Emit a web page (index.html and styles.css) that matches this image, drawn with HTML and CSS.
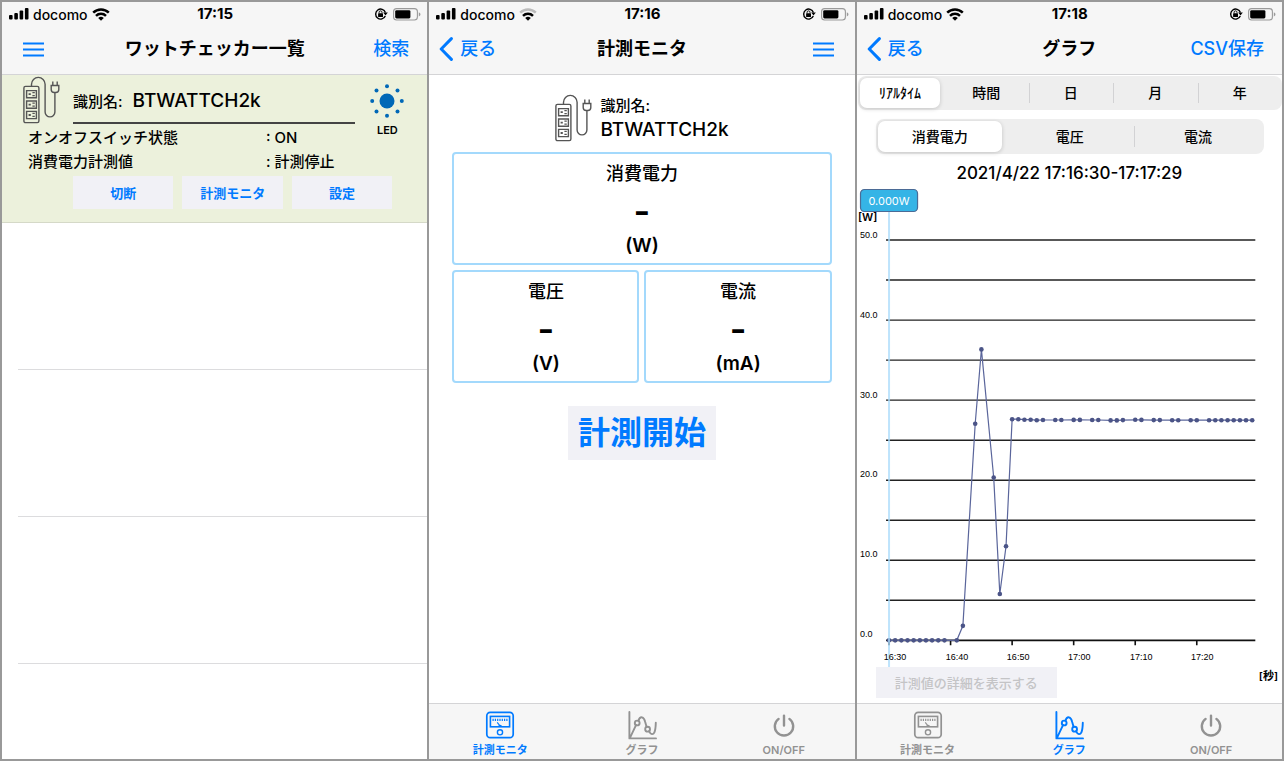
FILE: index.html
```html
<!DOCTYPE html>
<html lang="ja">
<head>
<meta charset="utf-8">
<meta name="viewport" content="width=device-width, initial-scale=1">
<title>ワットチェッカー</title>
<link rel="stylesheet" href="styles.css">
</head>
<body>
<svg class="defs" aria-hidden="true">
  <symbol id="signal" viewBox="0 0 20 12"><rect x="0" y="7" width="3.6" height="4.5" rx="1"/><rect x="5.3" y="5" width="3.6" height="6.5" rx="1"/><rect x="10.6" y="2.6" width="3.6" height="8.9" rx="1"/><rect x="15.9" y="0" width="3.6" height="11.5" rx="1"/></symbol>
  <symbol id="wifi-arc" viewBox="0 0 18 13"><path d="M1.2 4.6a11.2 11.2 0 0 1 15.6 0" fill="none" stroke="currentColor" stroke-width="2.5"/></symbol>
  <symbol id="wifi-core" viewBox="0 0 18 13"><path d="M4 7.8a7.2 7.2 0 0 1 10 0" fill="none" stroke="currentColor" stroke-width="2.5"/><path d="M9 12.8 6.2 10a4 4 0 0 1 5.6 0z"/></symbol>
  <symbol id="lock" viewBox="0 0 14 14"><path d="M11.4 5.4A5 5 0 1 0 11.3 9" fill="none" stroke="currentColor" stroke-width="1.4"/><path d="M9.2 5.6h4.6l-2.3 3z"/><rect x="4.1" y="6.2" width="4.9" height="3.8" rx=".6"/><path d="M5.1 6.4V5.3a1.45 1.45 0 0 1 2.9 0v1.1" fill="none" stroke="currentColor" stroke-width=".9"/></symbol>
  <symbol id="battery" viewBox="0 0 28 13"><rect x=".6" y=".6" width="23.8" height="11.4" rx="3" fill="none" stroke="#9a9a9a" stroke-width="1.1"/><rect x="2.2" y="2.2" width="15.2" height="8.2" rx="1.4"/><path d="M25.8 4.2c2.2.8 2.2 3.4 0 4.2z" fill="#9a9a9a"/></symbol>
  <symbol id="menu" viewBox="0 0 21 15"><path d="M0 1.5h21M0 7.5h21M0 13.5h21" stroke="currentColor" stroke-width="2"/></symbol>
  <symbol id="back" viewBox="0 0 14 24"><path d="M12.4 1.6 2.2 12l10.2 10.4" fill="none" stroke="currentColor" stroke-width="3" stroke-linecap="round" stroke-linejoin="round"/></symbol>
  <symbol id="strip" viewBox="0 0 38 48">
    <g fill="none" stroke="currentColor" stroke-width="1.4">
      <rect x=".9" y="10.4" width="15" height="36.2" rx="1.6"/>
      <path d="M8.5 10.4V8.2a6.8 6.8 0 0 1 13.6 0V36a4.8 4.8 0 0 0 9.8 0V16.8M28.2 9.5h7.6v4a3 3 0 0 1-3 3h-1.6a3 3 0 0 1-3-3zM29.8 9.5v-4M34.2 9.5v-4"/>
      <path d="M3.6 14.6h9.8v7.2H3.6zM3.6 25h9.8v7.2H3.6zM3.6 35.4h9.8v7.2H3.6z"/>
    </g>
    <path d="M5.6 17.3h2.2v1.8H5.6zM9.4 16h2.4v1.3H9.4zM9.4 19h2.4v1.3H9.4zM5.6 27.7h2.2v1.8H5.6zM9.4 26.4h2.4v1.3H9.4zM9.4 29.4h2.4v1.3H9.4zM5.6 38.1h2.2v1.8H5.6zM9.4 36.8h2.4v1.3H9.4zM9.4 39.8h2.4v1.3H9.4z"/>
  </symbol>
  <symbol id="led" viewBox="0 0 34 34"><circle cx="17" cy="17" r="7.5"/><circle cx="17" cy="2.2" r="2"/><circle cx="27.5" cy="6.5" r="2"/><circle cx="31.8" cy="17" r="2"/><circle cx="27.5" cy="27.5" r="2"/><circle cx="17" cy="31.8" r="2"/><circle cx="6.5" cy="27.5" r="2"/><circle cx="2.2" cy="17" r="2"/><circle cx="6.5" cy="6.5" r="2"/></symbol>
  <symbol id="meter" viewBox="0 0 30 30"><g fill="none" stroke="currentColor"><rect x="1.8" y="2.3" width="26.4" height="25.4" rx="3.4" stroke-width="1.7"/><rect x="5.4" y="6.4" width="19.2" height="10.4" stroke-width="1.6"/><circle cx="15" cy="22.3" r="2.6" stroke-width="1.4"/><path d="M7.5 9.8h15" stroke-width="2.2" stroke-dasharray="1.2 1.1"/><path d="m15.6 16.6-3.4-4.2" stroke-width="1.1"/></g><path d="M13 17c.4-3 3.8-3 4.2 0z"/></symbol>
  <symbol id="graph" viewBox="0 0 30 30"><g fill="none" stroke="currentColor" stroke-width="1.9" stroke-linecap="round" stroke-linejoin="round"><path d="M2.4 2v26.400H29M3.2 27.400 9 15.200"/><circle cx="10.200" cy="13" r="2.400"/><circle cx="20.600" cy="19.200" r="2.400"/><path d="M11.400 10.800C13.200 5.400 17 6.600 18.200 12l1.400 5M22.200 21.300c1.600 3.600 4 3.600 5.200 1 1.100-2.400 1.300-5.400 1.400-9.600"/></g></symbol>
  <symbol id="power" viewBox="0 0 30 30"><path d="M9.6 8.900a9.200 9.200 0 1 0 10.800 0M15 5.600v10" fill="none" stroke="currentColor" stroke-width="2.4" stroke-linecap="round"/></symbol>
</svg>

<section class="screen">
  <header class="top">
    <div class="status">
      <div class="carrier"><svg class="signal"><use href="#signal"/></svg><span>docomo</span><svg class="wifi"><use href="#wifi-arc"/><use href="#wifi-core"/></svg></div>
      <time class="clock">17:15</time>
      <div class="power"><svg class="lock"><use href="#lock"/></svg><svg class="battery"><use href="#battery"/></svg></div>
    </div>
    <nav class="nav">
      <button class="link" aria-label="メニュー"><svg class="bars"><use href="#menu"/></svg></button>
      <h1 class="title">ワットチェッカー一覧</h1>
      <button class="link end">検索</button>
    </nav>
  </header>
  <ul class="list">
    <li class="device">
      <svg class="strip"><use href="#strip"/></svg>
      <div class="field"><label for="device-name">識別名:</label><input class="name" id="device-name" value="BTWATTCH2k"></div>
      <button class="led"><svg class="lamp"><use href="#led"/></svg><span>LED</span></button>
      <dl class="state">
        <dt>オンオフスイッチ状態</dt><dd>: ON</dd>
        <dt>消費電力計測値</dt><dd>: 計測停止</dd>
      </dl>
      <div class="actions"><button class="soft">切断</button><button class="soft">計測モニタ</button><button class="soft">設定</button></div>
    </li>
    <li class="empty"></li>
    <li class="empty"></li>
    <li class="empty"></li>
  </ul>
</section>

<section class="screen">
  <header class="top">
    <div class="status">
      <div class="carrier"><svg class="signal"><use href="#signal"/></svg><span>docomo</span><svg class="wifi"><use class="faint" href="#wifi-arc"/><use href="#wifi-core"/></svg></div>
      <time class="clock">17:16</time>
      <div class="power"><svg class="lock"><use href="#lock"/></svg><svg class="battery"><use href="#battery"/></svg></div>
    </div>
    <nav class="nav">
      <button class="link back"><svg class="chevron"><use href="#back"/></svg>戻る</button>
      <h1 class="title">計測モニタ</h1>
      <button class="link end" aria-label="メニュー"><svg class="bars"><use href="#menu"/></svg></button>
    </nav>
  </header>
  <main class="monitor">
    <div class="ident">
      <svg class="strip"><use href="#strip"/></svg>
      <div class="ident-text"><span>識別名:</span><strong class="name">BTWATTCH2k</strong></div>
    </div>
    <div class="meters">
      <article class="meter wide"><h2>消費電力</h2><p class="value">-</p><p class="unit">(W)</p></article>
      <article class="meter"><h2>電圧</h2><p class="value">-</p><p class="unit">(V)</p></article>
      <article class="meter"><h2>電流</h2><p class="value">-</p><p class="unit">(mA)</p></article>
    </div>
    <button class="start">計測開始</button>
  </main>
  <footer class="tabs">
    <button class="tab active"><svg><use href="#meter"/></svg><span>計測モニタ</span></button>
    <button class="tab"><svg><use href="#graph"/></svg><span>グラフ</span></button>
    <button class="tab"><svg><use href="#power"/></svg><span>ON/OFF</span></button>
  </footer>
</section>

<section class="screen">
  <header class="top">
    <div class="status">
      <div class="carrier"><svg class="signal"><use href="#signal"/></svg><span>docomo</span><svg class="wifi"><use href="#wifi-arc"/><use href="#wifi-core"/></svg></div>
      <time class="clock">17:18</time>
      <div class="power"><svg class="lock"><use href="#lock"/></svg><svg class="battery"><use href="#battery"/></svg></div>
    </div>
    <nav class="nav">
      <button class="link back"><svg class="chevron"><use href="#back"/></svg>戻る</button>
      <h1 class="title">グラフ</h1>
      <button class="link end">CSV保存</button>
    </nav>
  </header>
  <main class="graph">
    <div class="segments period">
      <button class="segment selected">ﾘｱﾙﾀｲﾑ</button><button class="segment">時間</button><button class="segment">日</button><button class="segment">月</button><button class="segment">年</button>
    </div>
    <div class="segments kind">
      <button class="segment selected">消費電力</button><button class="segment">電圧</button><button class="segment">電流</button>
    </div>
    <p class="range">2021/4/22 17:16:30-17:17:29</p>
    <svg class="chart" viewBox="0 0 425 479" role="img" aria-label="消費電力 [W]">
      <defs><marker id="dot" markerUnits="userSpaceOnUse" markerWidth="6" markerHeight="6" refX="3" refY="3"><circle cx="3" cy="3" r="2.3" fill="#4b5487"/></marker></defs>
      <path class="grid" d="M29 52h369M29 92h369M29 132h369M29 172h369M29 212h369M29 252h369M29 292h369M29 332h369M29 372h369M29 412h369"/>
      <path class="axis" d="M29 452h369M32 452v5M93.500 452v5M155 452v5M216.500 452v5M278 452v5M339.500 452v5"/>
      <polyline class="series" points="32,452 38.100,452 44.300,452 50.500,452 56.600,452 62.800,452 68.900,452 75,452 81.200,452 87.400,452 99.700,452 105.800,437.500 118.100,235.500 124.300,161.300 136.600,289.300 142.700,405.700 148.900,358 155,231 161.200,231 167.300,231.500 173.500,231.500 179.600,232 185.800,231.800 198.100,231.800 204.200,231.800 216.500,231.700 222.700,231.700 235,231.800 241.100,231.800 253.400,232.200 259.600,232.200 265.700,231.900 278,231.600 284.200,231.700 296.500,231.900 302.600,231.900 314.900,232 321,232 333.400,232 339.500,232 351.800,232 358,232 364.100,232 370.300,232 376.400,232 382.600,232 388.700,232 394.900,232"/>
      <path class="cursor" d="M32 24v455"/>
      <g class="scale"><text x="3" y="50">50.0</text><text x="3" y="130">40.0</text><text x="3" y="210">30.0</text><text x="3" y="289">20.0</text><text x="3" y="369">10.0</text><text x="3" y="449">0.0</text></g>
      <g class="scale mid"><text x="38" y="472">16:30</text><text x="100" y="472">16:40</text><text x="161" y="472">16:50</text><text x="222" y="472">17:00</text><text x="284" y="472">17:10</text><text x="345" y="472">17:20</text></g>
      <text class="axis-unit" x="1" y="33">[W]</text>
      <rect class="tip" x="3.500" y="1.500" width="57" height="22" rx="4"/>
      <text class="tip-text" x="32" y="17">0.000W</text>
    </svg>
    <div class="below"><button class="detail" disabled>計測値の詳細を表示する</button><span class="seconds">[秒]</span></div>
  </main>
  <footer class="tabs">
    <button class="tab"><svg><use href="#meter"/></svg><span>計測モニタ</span></button>
    <button class="tab active"><svg><use href="#graph"/></svg><span>グラフ</span></button>
    <button class="tab"><svg><use href="#power"/></svg><span>ON/OFF</span></button>
  </footer>
</section>
</body>
</html>
```

FILE: styles.css
```css
* { box-sizing: border-box; margin: 0; padding: 0; }

body {
  display: grid;
  grid-template-columns: repeat(3, minmax(0, 1fr));
  gap: 2px;
  padding: 2px;
  min-height: 100vh;
  background: #999;
  color: #000;
  font-family: Inter, "Noto Sans CJK JP", sans-serif;
  font-size: 15px;
  font-weight: 500;
}

button, input { border: 0; background: none; color: inherit; font: inherit; }
svg { display: block; fill: currentColor; }
.defs { display: none; }

.screen { display: flex; flex-direction: column; background: #fff; }

/* Status and navigation bars */
.top { background: #f6f6f6; border-bottom: 1px solid #d4d4d6; }
.status {
  display: grid;
  grid-template-columns: 1fr auto 1fr;
  align-items: center;
  height: 24px;
  padding: 0 6px 0 7px;
  font-size: 14px;
}
.carrier, .power { display: flex; align-items: center; }
.carrier { gap: 4px; }
.power { justify-content: flex-end; gap: 5px; }
.clock { font-size: 15px; font-weight: 700; line-height: 20px; }
.signal { width: 20px; height: 12px; }
.wifi { width: 18px; height: 13px; }
.faint { color: #bbb; }
.lock { width: 14px; height: 14px; }
.battery { width: 28px; height: 13px; }

.nav {
  display: grid;
  grid-template-columns: 1fr auto 1fr;
  align-items: center;
  height: 48px;
  padding: 0 18px 2px;
  font-size: 18px;
}
.title { font-size: 18px; font-weight: 700; line-height: 24px; }
.link { display: flex; align-items: center; justify-self: start; color: #007aff; line-height: 26px; }
.back { gap: 7px; margin-left: -8px; }
.end { justify-self: end; }
.bars { width: 21px; height: 15px; margin: 0 3px; }
.chevron { width: 14px; height: 24px; }

/* Device list */
.list { list-style: none; }
.empty { height: 147px; margin-left: 16px; border-bottom: 1px solid #dcdcde; }
.device {
  display: grid;
  grid-template-columns: 50px minmax(0, 1fr) 72px;
  grid-template-rows: 49px auto auto;
  row-gap: 2px;
  padding: 0 0 13px 21px;
  background: #ecf1dc;
  border-bottom: 1px solid #d5d9c8;
}
.strip { width: 38px; height: 48px; color: #555; }
.device .strip { margin-top: 1px; }
.field { display: flex; align-items: center; gap: 10px; border-bottom: 2px solid #444; padding-top: 4px; }
.name { min-width: 0; font-size: 19px; font-weight: 500; }
.field .name { flex: 1; }
.led {
  grid-column: 3;
  grid-row: 1 / span 2;
  justify-self: center;
  align-self: start;
  display: grid;
  justify-items: center;
  gap: 5px;
  margin: 9px 8px 0 0;
  font-size: 11px;
  font-weight: 600;
}
.lamp { width: 34px; height: 34px; color: #0068b7; }
.state {
  grid-column: 1 / 3;
  grid-row: 2;
  display: grid;
  grid-template-columns: 8fr 3fr;
  padding-left: 5px;
  line-height: 24px;
}
.actions { grid-column: 1 / -1; display: flex; gap: 9px; padding: 0 35px 0 50px; }
.soft { flex: 1; height: 33px; background: #f1f1f6; color: #007aff; font-size: 13px; font-weight: 700; }

/* Monitor */
.monitor { flex: 1; display: flex; flex-direction: column; align-items: center; padding: 19px 23px; }
.ident { display: flex; gap: 7px; align-items: center; }
.ident-text { display: grid; line-height: 24px; }
.meters { display: grid; grid-template-columns: 1fr 1fr; gap: 5px; align-self: stretch; margin-top: 10px; }
.meter { border: 2px solid #a3d9fc; border-radius: 4px; padding: 6px 0 5px; text-align: center; }
.wide { grid-column: 1 / -1; }
.meter h2 { font-size: 18px; font-weight: 500; line-height: 28px; }
.value { font-size: 36px; font-weight: 600; line-height: 46px; }
.unit { font-size: 19px; font-weight: 600; line-height: 24px; }
.start { margin-top: 23px; padding: 0 10px; background: #f1f1f6; color: #007aff; font-size: 32px; font-weight: 700; line-height: 54px; }

/* Graph */
.graph { flex: 1; display: flex; flex-direction: column; }
.segments { display: grid; grid-auto-flow: column; grid-auto-columns: 1fr; padding: 2px; border-radius: 8px; background: #eee; }
.period { height: 34px; margin: 1px 0 0 1px; padding-right: 0; }
.kind { height: 35px; margin: 9px 18px 0 19px; }
.segment { position: relative; padding-bottom: 2px; font-size: 14px; }
.selected { border-radius: 7px; background: #fff; box-shadow: 0 1px 4px rgba(0, 0, 0, .18); margin-right: 4px; }
.segment:not(.selected) + .segment::before { content: ""; position: absolute; left: 0; top: 5px; bottom: 5px; width: 1px; background: #d2d2d4; }
.range { padding-top: 4px; line-height: 30px; font-size: 17px; text-align: center; }
.chart { width: 100%; }
.grid { stroke: #222; stroke-width: 1.4; }
.axis { fill: none; stroke: #111; stroke-width: 1.6; }
.series { fill: none; stroke: #5a659b; stroke-width: 1.2; marker-start: url(#dot); marker-mid: url(#dot); marker-end: url(#dot); }
.cursor { stroke: #a9dcfb; stroke-width: 2; opacity: .75; }
.scale { font: 9px "Liberation Sans", sans-serif; }
.mid { text-anchor: middle; }
.axis-unit { font-size: 11px; font-weight: 600; }
.tip { fill: #35b4e6; stroke: #4b6b96; stroke-width: 1.2; }
.tip-text { fill: #fff; font-size: 11px; font-weight: 400; text-anchor: middle; }
.below { display: flex; justify-content: space-between; align-items: flex-start; padding: 0 4px 0 19px; }
.detail { width: 181px; height: 31px; background: #f1f1f6; color: #c4c4c6; font-size: 13px; }
.seconds { font-size: 11px; font-weight: 600; }

/* Tab bar */
.tabs { display: grid; grid-template-columns: repeat(3, 1fr); height: 56px; border-top: 1px solid #d4d4d6; background: #f6f6f6; margin-top: auto; }
.tab { display: grid; justify-items: center; align-content: start; gap: 1px; padding-top: 6px; color: #929292; font-size: 11px; font-weight: 600; line-height: 18px; }
.tab svg { width: 30px; height: 30px; }
.active { color: #007aff; }
```
